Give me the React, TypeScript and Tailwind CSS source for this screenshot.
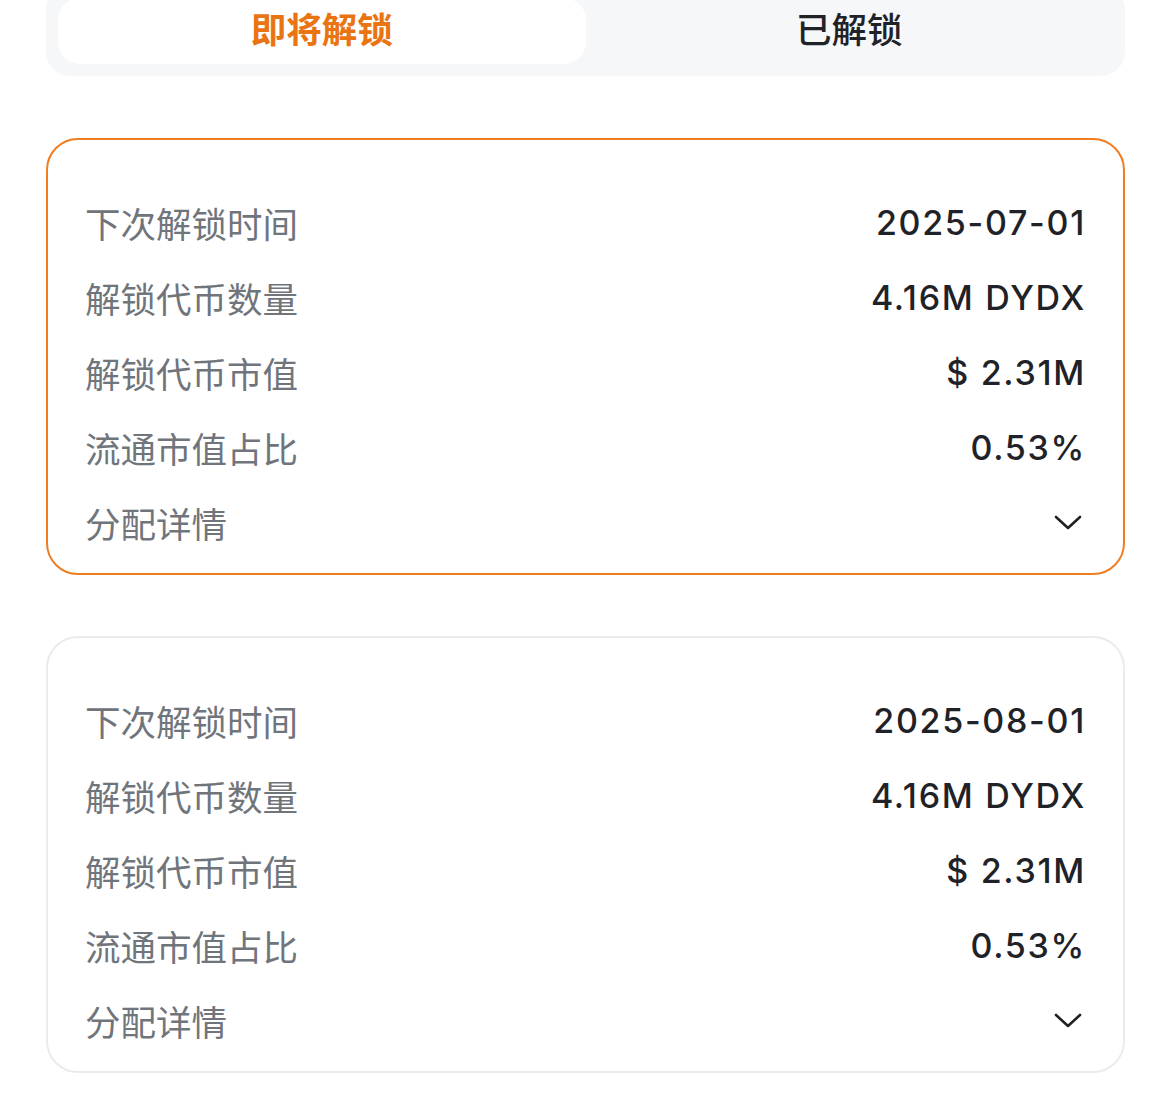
import React from "react";

const rows = (date: string) => [
  ["下次解锁时间", date],
  ["解锁代币数量", "4.16M DYDX"],
  ["解锁代币市值", "$ 2.31M"],
  ["流通市值占比", "0.53%"],
];

const cjk = { fontFamily: '"Noto Sans CJK SC", sans-serif' };
const num = { fontFamily: 'Inter, "Noto Sans CJK SC", sans-serif' };

function Chevron() {
  return (
    <svg width="30" height="20" viewBox="0 0 30 20" fill="none">
      <path d="M3 4 L15 15 L27 4" stroke="#222" strokeWidth="2.6" strokeLinecap="round" strokeLinejoin="round" />
    </svg>
  );
}

function Card({ date, active }: { date: string; active?: boolean }) {
  return (
    <div
      className={`rounded-[32px] border-2 ${active ? "border-[#ef7d22]" : "border-[#ebebeb]"} bg-white pt-[45px] pb-[13px] pl-[37px] pr-[38px]`}
    >
      {rows(date).map(([l, v]) => (
        <div key={l} className="flex h-[75px] items-center justify-between">
          <span className="text-[35.5px] text-[#70757c]" style={cjk}>{l}</span>
          <span className="mr-[-1px] text-[34px] font-medium tracking-[0.05em] text-[#1f2226]" style={num}>{v}</span>
        </div>
      ))}
      <div className="flex h-[75px] items-center justify-between">
        <span className="text-[35.5px] text-[#70757c]" style={cjk}>分配详情</span>
        <span className="mr-[2px] flex items-center"><Chevron /></span>
      </div>
    </div>
  );
}

export default function App() {
  return (
    <div className="min-h-[1117px] overflow-hidden bg-white px-[46px] pr-[45px]">
      <div className="-mt-[14px] flex rounded-b-[24px] rounded-t-[24px] bg-[#f6f7f9] p-[12px]">
        <div className="flex h-[66px] flex-1 items-center justify-center rounded-[22px] bg-white pb-[6px]">
          <span className="text-[35.5px] font-bold text-[#ea7412]" style={cjk}>即将解锁</span>
        </div>
        <div className="flex h-[66px] flex-1 items-center justify-center pb-[6px]">
          <span className="text-[35.5px] font-medium text-[#1f2226]" style={cjk}>已解锁</span>
        </div>
      </div>
      <div className="mt-[62px] flex flex-col gap-[61px]">
        <Card date="2025-07-01" active />
        <Card date="2025-08-01" />
      </div>
    </div>
  );
}
